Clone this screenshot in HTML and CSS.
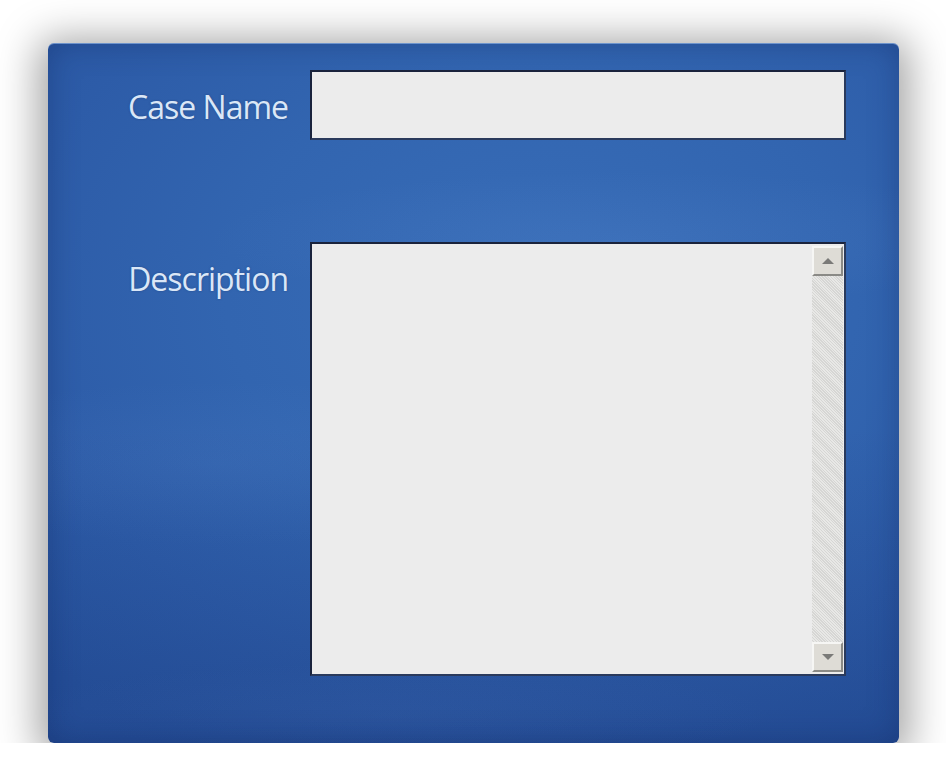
FILE: index.html
```html
<!DOCTYPE html>
<html lang="en">
<head>
<meta charset="utf-8">
<title>New Case</title>
<link rel="stylesheet" href="styles.css">
</head>
<body>
  <form class="panel">
    <label class="label" for="case-name">Case Name</label>
    <input class="field" id="case-name" type="text">

    <label class="label label-desc" for="case-desc">Description</label>
    <div class="textbox">
      <textarea class="textbox-input" id="case-desc"></textarea>
      <div class="scrollbar">
        <span class="scroll-btn"><svg width="14" height="8" viewBox="0 0 14 8"><path d="M7 1 L13 7 L1 7 Z" fill="#7a7a78"/></svg></span>
        <span class="scroll-track"></span>
        <span class="scroll-btn"><svg width="14" height="8" viewBox="0 0 14 8"><path d="M1 1 L13 1 L7 7 Z" fill="#7a7a78"/></svg></span>
      </div>
    </div>
  </form>
</body>
</html>
```

FILE: styles.css
```css
html, body {
  margin: 0;
  background: #ffffff;
}

body {
  padding: 43px 0 0 48px;
  font-family: "Open Sans", "DejaVu Sans", sans-serif;
}

.panel {
  box-sizing: border-box;
  width: 851px;
  height: 700px;
  border-radius: 6px;
  padding: 27px 0 0 0;
  display: grid;
  grid-template-columns: 240px 536px;
  grid-template-rows: 70px 434px;
  column-gap: 22px;
  row-gap: 102px;
  align-content: start;
  background:
    radial-gradient(ellipse 560px 90px at 68% 28%, rgba(110, 155, 220, 0.12), transparent 75%),
    radial-gradient(ellipse 460px 110px at 20% 60%, rgba(110, 155, 220, 0.10), transparent 75%),
    radial-gradient(ellipse 520px 70px at 40% 96%, rgba(100, 140, 210, 0.08), transparent 75%),
    linear-gradient(180deg, transparent 55%, rgba(20, 45, 110, 0.25) 100%),
    radial-gradient(ellipse 700px 520px at 58% 36%, #386db8 0%, #3265b0 45%, #2d5ca8 75%, #2855a0 100%);
  box-shadow:
    inset 0 1px 0 rgba(140, 175, 225, 0.7),
    inset 0 0 30px rgba(15, 35, 90, 0.35),
    0 6px 40px 10px rgba(0, 0, 0, 0.36);
}

.label {
  justify-self: end;
  padding-top: 19px;
  font-size: 32px;
  line-height: 36px;
  letter-spacing: -1px;
  color: #dae7f7;
  text-shadow: 0 0 2px rgba(30, 60, 120, 0.7);
}

.field {
  box-sizing: border-box;
  width: 536px;
  height: 70px;
  margin: 0;
  padding: 0 10px;
  border: 2px solid #1a233c;
  border-right-color: #2a3a5c;
  border-bottom-color: #2a3a5c;
  background: #ececec;
  font: inherit;
  font-size: 20px;
  outline: none;
}

.textbox {
  box-sizing: border-box;
  width: 536px;
  height: 434px;
  display: flex;
  border: 2px solid #1a233c;
  border-right-color: #2a3a5c;
  border-bottom-color: #2a3a5c;
  background: #ececec;
}

.textbox-input {
  flex: 1;
  margin: 0;
  padding: 8px 10px;
  border: 0;
  background: transparent;
  resize: none;
  outline: none;
  font: inherit;
  font-size: 18px;
}

.scrollbar {
  width: 31px;
  display: flex;
  flex-direction: column;
  padding: 2px 1px 2px 0;
}

.scroll-btn {
  box-sizing: border-box;
  height: 30px;
  display: flex;
  align-items: center;
  justify-content: center;
  background: #dedcd6;
  border: 2px solid;
  border-color: #f6f6f4 #8a8a86 #8a8a86 #f6f6f4;
}

.scroll-track {
  flex: 1;
  background: repeating-linear-gradient(45deg, #e8e8e6 0 1px, #d6d6d4 1px 2px);
}
```
